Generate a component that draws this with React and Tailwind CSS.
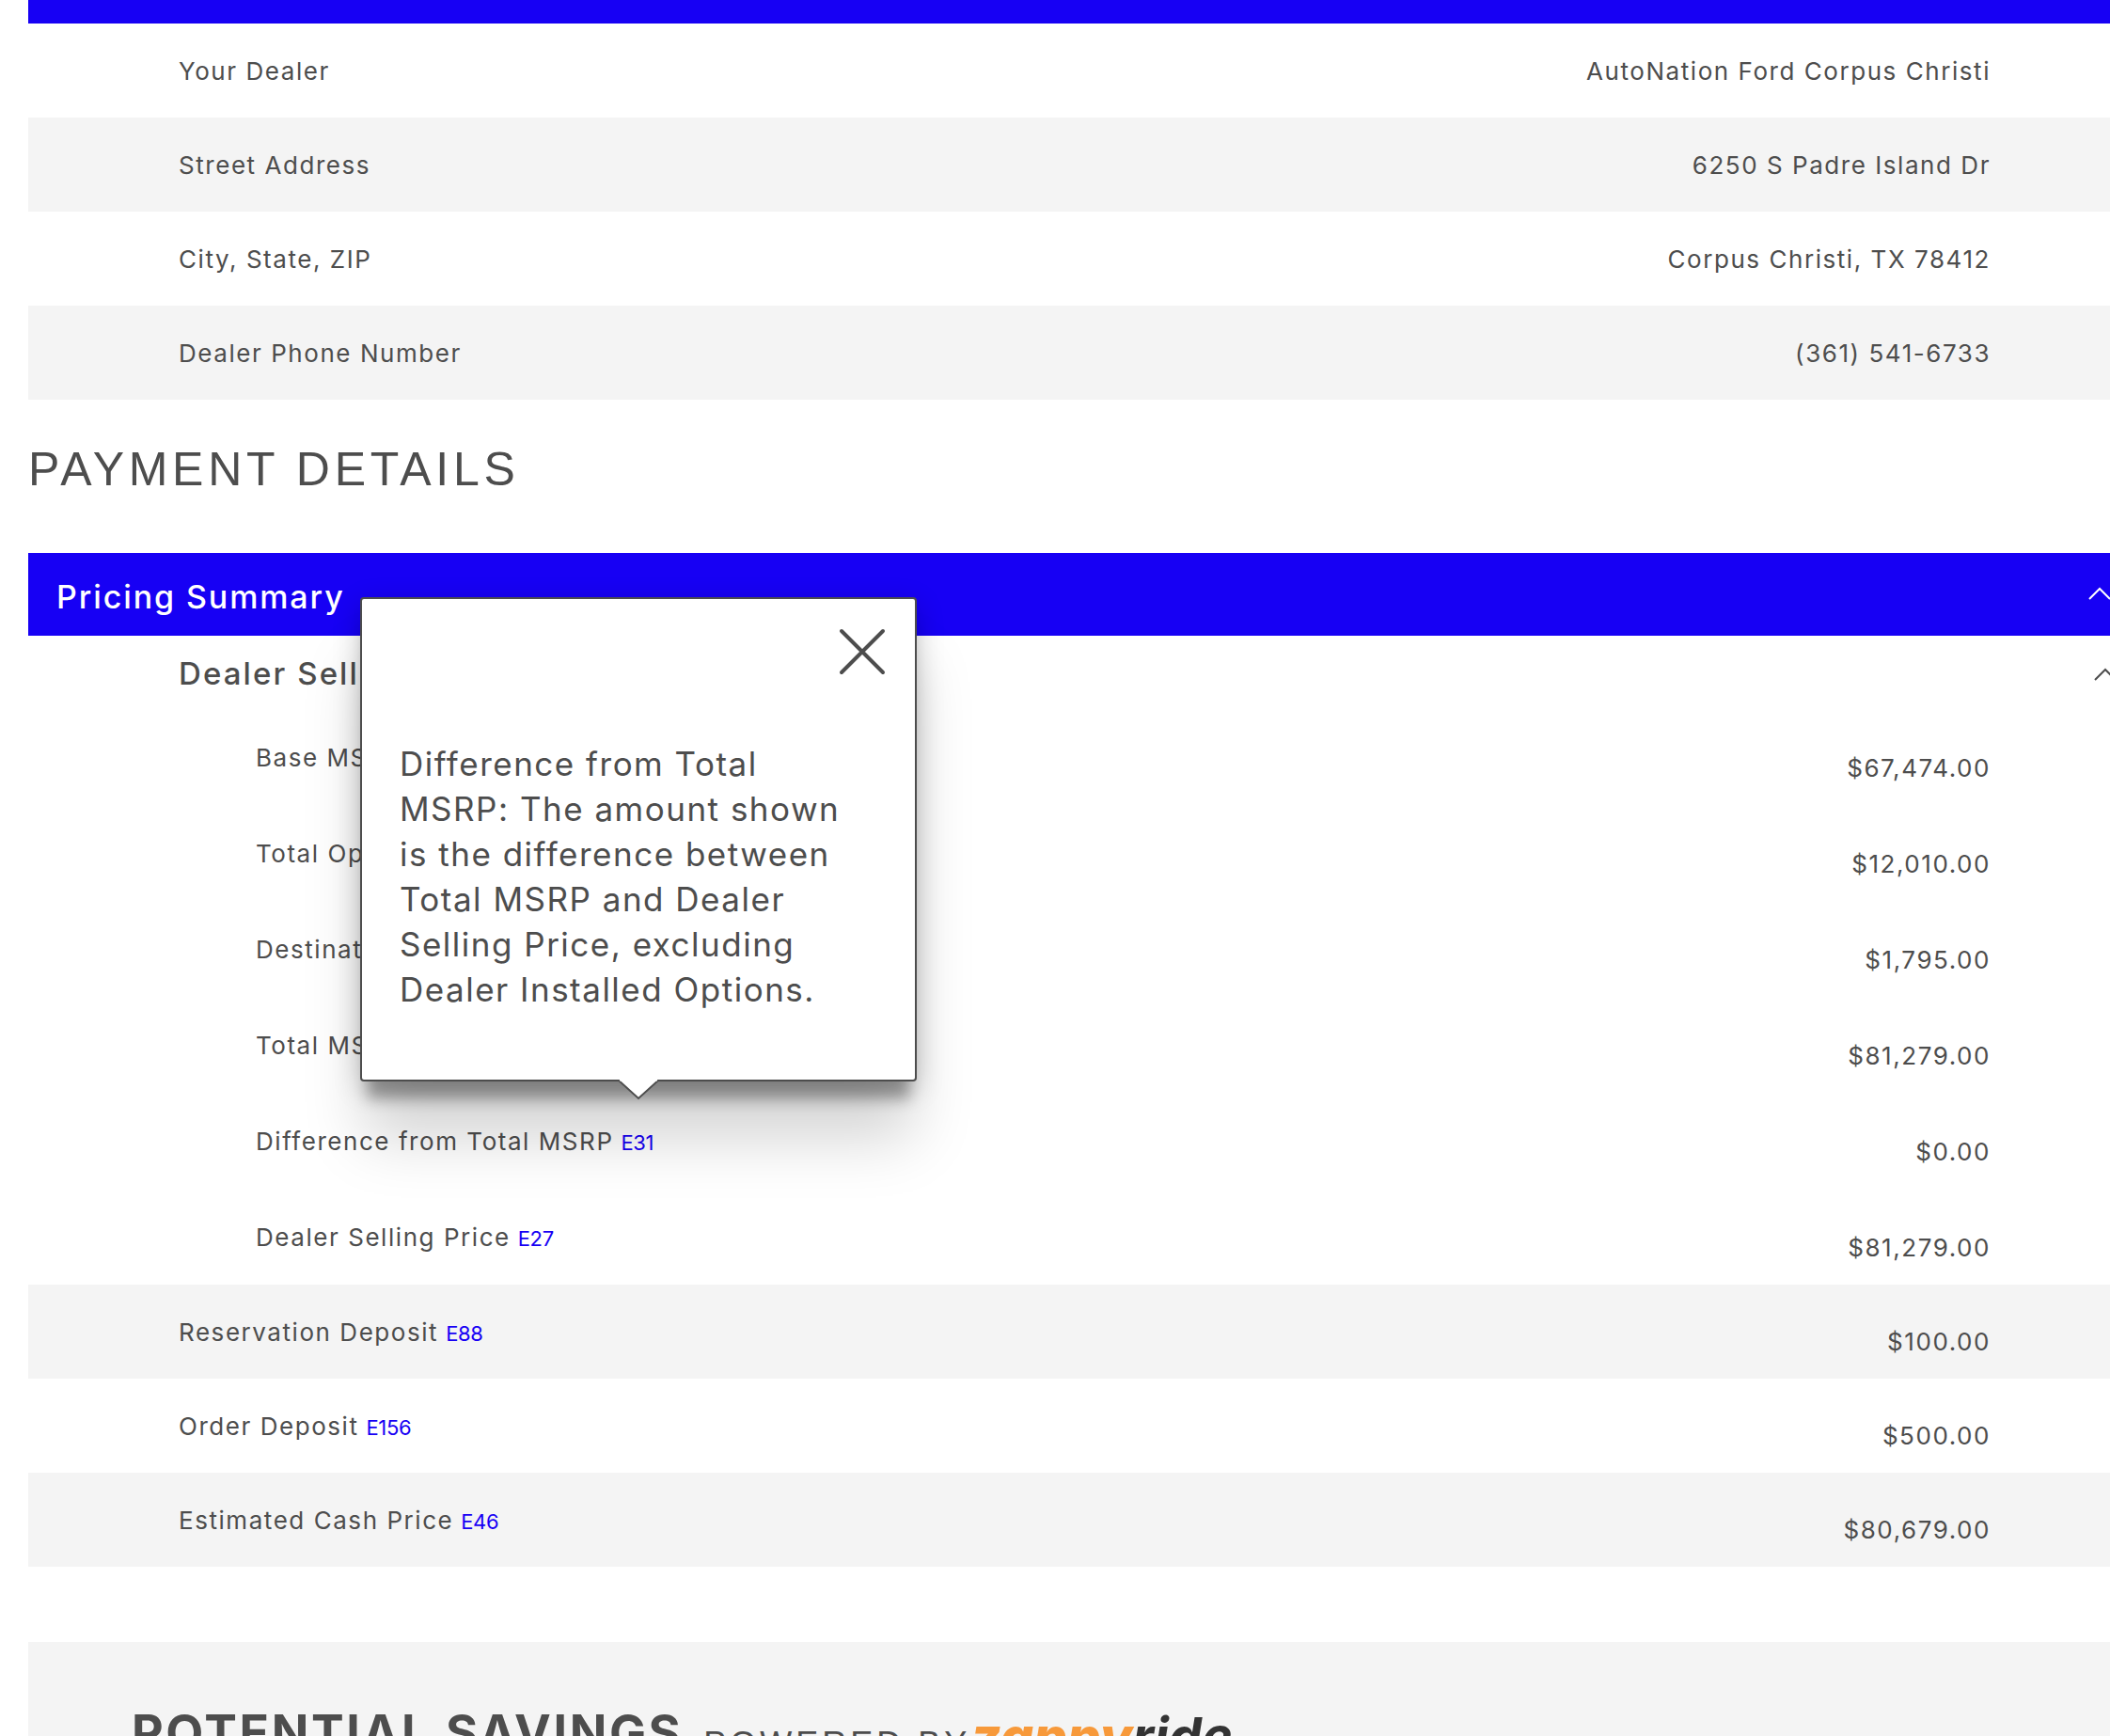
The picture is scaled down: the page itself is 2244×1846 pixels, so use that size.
const dealerRows = [
    { label: 'Your Dealer', value: 'AutoNation Ford Corpus Christi' },
    { label: 'Street Address', value: '6250 S Padre Island Dr', gray: true },
    { label: 'City, State, ZIP', value: 'Corpus Christi, TX 78412' },
    { label: 'Dealer Phone Number', value: '(361) 541-6733', gray: true },
];

const sellingRows = [
    { label: 'Base MSRP', value: '$67,474.00' },
    { label: 'Total Options', value: '$12,010.00' },
    { label: 'Destination Charge', value: '$1,795.00' },
    { label: 'Total MSRP', value: '$81,279.00' },
    { label: 'Difference from Total MSRP', note: 'E31', value: '$0.00' },
    { label: 'Dealer Selling Price', note: 'E27', value: '$81,279.00' },
];

const depositRows = [
    { label: 'Reservation Deposit', note: 'E88', value: '$100.00', gray: true },
    { label: 'Order Deposit', note: 'E156', value: '$500.00' },
    { label: 'Estimated Cash Price', note: 'E46', value: '$80,679.00', gray: true },
];

const Note = ({ children }) => (
    <span className="ml-2 text-[22px] tracking-[-0.4px] text-[#1700f4]">{children}</span>
);

const Chevron = ({ className }) => (
    <svg width="24" height="14" viewBox="0 0 24 14" fill="none" stroke="currentColor" strokeWidth="2" className={className}>
        <path d="M1 13 L12 2 L23 13" />
    </svg>
);

const PriceRow = ({ row, indent }) => (
    <div className={`flex items-center justify-between pr-[127px] ${indent ? 'h-[102px] pl-[242px]' : `h-[100px] pl-[160px] ${row.gray ? 'bg-[#f4f4f4]' : ''}`}`}>
        <span>{row.label}{row.note && <Note>{row.note}</Note>}</span>
        <span className={indent ? 'pt-[22px]' : 'pt-[20px]'}>{row.value}</span>
    </div>
);

const App = () => {
    return (
        <div className="relative h-[1846px] overflow-hidden bg-white pl-[30px] font-['Inter',sans-serif] text-[26px] tracking-[1.55px] text-[#4d4d4d]">
            <div className="h-[25px] bg-[#1700f4]"></div>

            {dealerRows.map(row => (
                <div key={row.label} className={`flex h-[100px] items-center justify-between pl-[160px] pr-[127px] ${row.gray ? 'bg-[#f4f4f4]' : ''}`}>
                    <span>{row.label}</span>
                    <span>{row.value}</span>
                </div>
            ))}

            <div className="flex h-[163px] items-center pb-[14px]">
                <h2 className="font-['Liberation_Sans',sans-serif] text-[50px] font-normal tracking-[4.7px]">PAYMENT DETAILS</h2>
            </div>

            <div className="flex h-[88px] items-center justify-between overflow-hidden bg-[#1700f4] pl-[30px] text-white">
                <span className="pt-[4px] text-[34px] font-medium tracking-[1.9px]">Pricing Summary</span>
                <Chevron className="mr-[-1px] mt-[-3px] shrink-0 text-white" />
            </div>

            <div className="flex h-[78px] items-center justify-between overflow-hidden pl-[160px]">
                <span className="pt-[3px] text-[33px] font-medium tracking-[2.1px]">Dealer Selling Price</span>
                <Chevron className="mr-[-7px] mt-[3px] shrink-0 text-[#4d4d4d]" />
            </div>

            {sellingRows.map(row => <PriceRow key={row.label} row={row} indent />)}
            {depositRows.map(row => <PriceRow key={row.label} row={row} />)}

            <div className="mt-[80px] h-[200px] bg-[#f4f4f4] pl-[110px] pt-[53px]">
                <div className="flex items-baseline">
                    <span className="text-[52px] font-bold leading-[60px] tracking-[2.6px]">POTENTIAL SAVINGS</span>
                    <div className="flex translate-y-[6px] items-baseline">
                        <span className="ml-[22px] font-['Liberation_Sans',sans-serif] text-[36px] tracking-[4px]">POWERED BY</span>
                        <span className="text-[56px] font-extrabold italic tracking-[0px] text-[#f7993a]">zappy</span>
                        <span className="text-[56px] font-bold italic tracking-[0px] text-[#333333]">ride</span>
                    </div>
                </div>
            </div>

            {/* tooltip for the E31 note */}
            <div className="absolute left-[383px] top-[635px] h-[515px] w-[592px] rounded-[4px] border-2 border-[#4d4d4d] bg-white pl-[40px] pt-[151px] text-[35px] leading-[48px] tracking-[1.5px] shadow-[0_26px_14px_-8px_rgba(0,0,0,0.3),0_8px_30px_rgba(0,0,0,0.2),0_65px_60px_-4px_rgba(0,0,0,0.17)]">
                <svg width="50" height="50" viewBox="0 0 50 50" fill="none" stroke="#4d4d4d" strokeWidth="4" strokeLinecap="round" className="absolute right-[31px] top-[31px]">
                    <path d="M3 3 L47 47 M47 3 L3 47" />
                </svg>
                <p className="w-[520px]">
                    Difference from Total<br />
                    MSRP: The amount shown<br />
                    is the difference between<br />
                    Total MSRP and Dealer<br />
                    Selling Price, excluding<br />
                    Dealer Installed Options.
                </p>
                <svg width="44" height="22" viewBox="0 0 44 22" className="absolute bottom-[-22px] left-[272px]">
                    <path d="M0 0 L22 20 L44 0" fill="#ffffff" stroke="#4d4d4d" strokeWidth="2" />
                    <path d="M2 0 L42 0" stroke="#ffffff" strokeWidth="3" />
                </svg>
            </div>
        </div>
    );
};

export default App;
